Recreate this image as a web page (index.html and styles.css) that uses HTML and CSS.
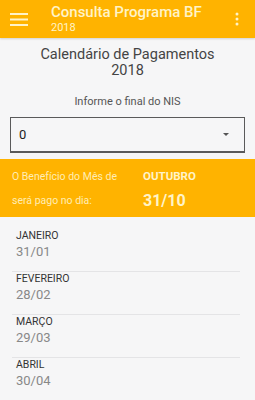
FILE: index.html
```html
<!DOCTYPE html>
<html lang="pt-BR">
<head>
    <meta charset="UTF-8">
    <meta name="viewport" content="width=device-width, initial-scale=1.0">
    <title>Consulta Programa BF</title>
    <link rel="stylesheet" href="styles.css">
</head>
<body>
    <header class="toolbar">
        <svg class="menu-icon" width="18" height="13" viewBox="0 0 18 13">
            <rect x="0" y="0" width="18" height="2" fill="#fff3c8"/>
            <rect x="0" y="5.5" width="18" height="2" fill="#fff3c8"/>
            <rect x="0" y="11" width="18" height="2" fill="#fff3c8"/>
        </svg>
        <div class="toolbar-title">
            <div class="title">Consulta Programa BF</div>
            <div class="subtitle">2018</div>
        </div>
        <svg class="more-icon" width="4" height="14" viewBox="0 0 4 14">
            <circle cx="2" cy="2" r="1.5" fill="#fff3c8"/>
            <circle cx="2" cy="7" r="1.5" fill="#fff3c8"/>
            <circle cx="2" cy="12" r="1.5" fill="#fff3c8"/>
        </svg>
    </header>

    <main>
        <h1 class="page-title">Calendário de Pagamentos<br>2018</h1>
        <p class="hint">Informe o final do NIS</p>

        <div class="select">
            <span>0</span>
            <span class="arrow"></span>
        </div>

        <div class="highlight">
            <span class="hl-label">O Benefício do Mês de</span>
            <span class="hl-month">OUTUBRO</span>
            <span class="hl-label">será pago no dia:</span>
            <span class="hl-date">31/10</span>
        </div>

        <ul class="months">
            <li><div class="month">JANEIRO</div><div class="date">31/01</div></li>
            <li><div class="month">FEVEREIRO</div><div class="date">28/02</div></li>
            <li><div class="month">MARÇO</div><div class="date">29/03</div></li>
            <li><div class="month">ABRIL</div><div class="date">30/04</div></li>
        </ul>
    </main>
</body>
</html>
```

FILE: styles.css
```css
body {
    margin: 0;
    font-family: Roboto, "Noto Sans", sans-serif;
    background-color: #f6f6f7;
    overflow: hidden;
    height: 400px;
}

.toolbar {
    height: 38px;
    background-color: #ffb300;
    display: flex;
    align-items: center;
    padding: 0 16px 0 10px;
    box-shadow: 0 1px 2px rgba(0, 0, 0, 0.15);
}

.menu-icon {
    flex: none;
}

.toolbar-title {
    margin-left: 23px;
    flex: 1;
    color: #fff3c8;
}

.title {
    font-size: 15px;
    font-weight: 500;
    line-height: 17px;
}

.subtitle {
    font-size: 11px;
    line-height: 13px;
}

.more-icon {
    flex: none;
}

.page-title {
    margin: 9px 0 0;
    text-align: center;
    font-size: 14.5px;
    font-weight: 400;
    line-height: 16px;
    color: #444;
}

.hint {
    margin: 16px 0 0;
    text-align: center;
    font-size: 11px;
    color: #555;
}

.select {
    margin: 9px 10px 0;
    height: 33px;
    border: 1px solid #5a5a5a;
    border-bottom-width: 2px;
    display: flex;
    align-items: center;
    justify-content: space-between;
    padding: 0 15px 0 8px;
    font-size: 13px;
    color: #222;
}

.arrow {
    width: 0;
    height: 0;
    border-left: 3px solid transparent;
    border-right: 3px solid transparent;
    border-top: 3px solid #555;
}

.highlight {
    margin-top: 6px;
    height: 58px;
    background-color: #ffb300;
    display: grid;
    grid-template-columns: 131px 1fr;
    grid-template-rows: 24px 24px;
    align-items: center;
    padding: 5px 0 0 12px;
    box-sizing: border-box;
}

.hl-label {
    font-size: 10.5px;
    color: #ffedb5;
}

.hl-month {
    font-size: 11.5px;
    font-weight: 700;
    color: #fff3c8;
}

.hl-date {
    font-size: 16px;
    font-weight: 700;
    color: #fff3c8;
}

.months {
    list-style: none;
    margin: 12px 0 0;
    padding: 0;
}

.months li {
    margin: 0 15px 0 12px;
    padding: 0 0 0 4px;
    height: 42px;
    border-bottom: 1px solid #e4e4e6;
}

.month {
    font-size: 10.5px;
    color: #333;
    line-height: 14px;
}

.date {
    font-size: 13px;
    color: #888;
    line-height: 17px;
}
```
